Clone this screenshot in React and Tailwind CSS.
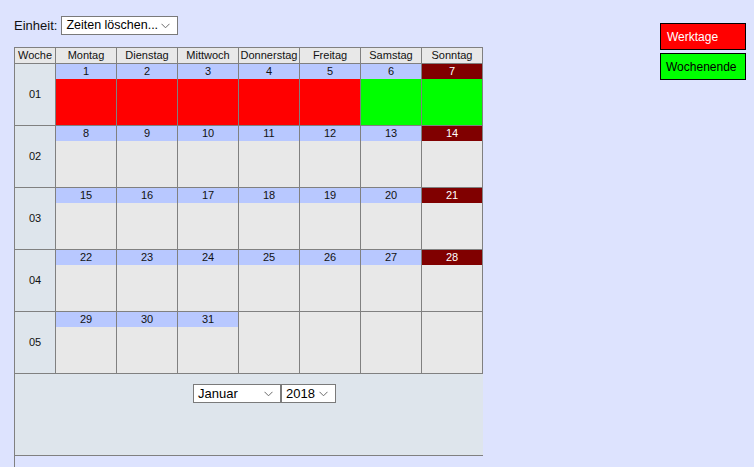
import React from "react";

const days = ["Montag", "Dienstag", "Mittwoch", "Donnerstag", "Freitag", "Samstag", "Sonntag"];

function Chevron() {
  return (
    <svg width="9" height="6" viewBox="0 0 9 6" className="shrink-0">
      <polyline points="0.5,0.8 4.5,4.8 8.5,0.8" fill="none" stroke="#6b6b6b" strokeWidth="1" />
    </svg>
  );
}

function FakeSelect({ label, width, small }) {
  return (
    <div
      className={
        "h-[19px] bg-white border border-[#7a7a7a] flex items-center pl-[4px] pr-[7px] justify-between text-black leading-none whitespace-nowrap " +
        (small ? "text-[12.5px]" : "text-[13px]")
      }
      style={{ width }}
    >
      <span>{label}</span>
      <Chevron />
    </div>
  );
}

const weeks = [
  { no: "01", d: [1, 2, 3, 4, 5, 6, 7] },
  { no: "02", d: [8, 9, 10, 11, 12, 13, 14] },
  { no: "03", d: [15, 16, 17, 18, 19, 20, 21] },
  { no: "04", d: [22, 23, 24, 25, 26, 27, 28] },
  { no: "05", d: [29, 30, 31, null, null, null, null] },
];

export default function App() {
  return (
    <div
      className="w-full h-screen bg-[#dde3fe] overflow-hidden flex justify-between pr-[8px]"
      style={{ fontFamily: '"Liberation Sans", Arial, sans-serif' }}
    >
      <div className="pl-[14px] pt-[16px] flex flex-col">
        <div className="flex items-center h-[19px]">
          <span className="text-[13px] text-[#111] mr-[4px] whitespace-nowrap">Einheit:</span>
          <FakeSelect label="Zeiten löschen..." width={117} small />
        </div>
        <div className="mt-[12px] w-[469px] text-[11px] text-[#111]">
          <div className="grid grid-cols-[41px_repeat(7,61px)] border-r border-[#808080]">
            <div className="h-[16px] border-l border-t border-[#808080] bg-[#e8e8e8] flex items-center justify-center">
              Woche
            </div>
            {days.map((d) => (
              <div
                key={d}
                className="h-[16px] border-l border-t border-[#808080] bg-[#e8e8e8] flex items-center justify-center"
              >
                {d}
              </div>
            ))}
          </div>
          {weeks.map((w, wi) => (
            <div key={w.no} className="grid grid-cols-[41px_repeat(7,61px)] border-r border-[#808080]">
              <div className="h-[62px] border-l border-t border-[#808080] bg-[#dee5ec] flex items-center justify-center">
                {w.no}
              </div>
              {w.d.map((n, i) => {
                const sunday = i === 6;
                let body = "bg-[#e8e8e8]";
                if (wi === 0) body = i >= 5 ? "bg-[#00ff00]" : "bg-[#ff0000]";
                return (
                  <div key={i} className="h-[62px] border-l border-t border-[#808080] flex flex-col">
                    {n !== null && (
                      <div
                        className={
                          "h-[15px] shrink-0 flex items-center justify-center " +
                          (sunday ? "bg-[#800000] text-white" : "bg-[#b8c8ff]")
                        }
                      >
                        {n}
                      </div>
                    )}
                    <div className={"flex-1 " + body}></div>
                  </div>
                );
              })}
            </div>
          ))}
          <div className="h-[83px] border-l border-t border-b border-[#808080] bg-[#dee5ec] pt-[10px] pl-[178px]">
            <div className="flex">
              <FakeSelect label="Januar" width={88} />
              <FakeSelect label="2018" width={55} />
            </div>
          </div>
          <div className="h-[20px] border-l border-[#808080]"></div>
        </div>
      </div>
      <div className="pt-[23px] flex flex-col gap-[3px]">
        <div className="w-[86px] h-[27px] border border-black bg-[#ff0000] text-white text-[12px] flex items-center pl-[6px]">
          Werktage
        </div>
        <div className="w-[86px] h-[27px] border border-black bg-[#00ff00] text-black text-[12px] flex items-center pl-[5px]">
          Wochenende
        </div>
      </div>
    </div>
  );
}
